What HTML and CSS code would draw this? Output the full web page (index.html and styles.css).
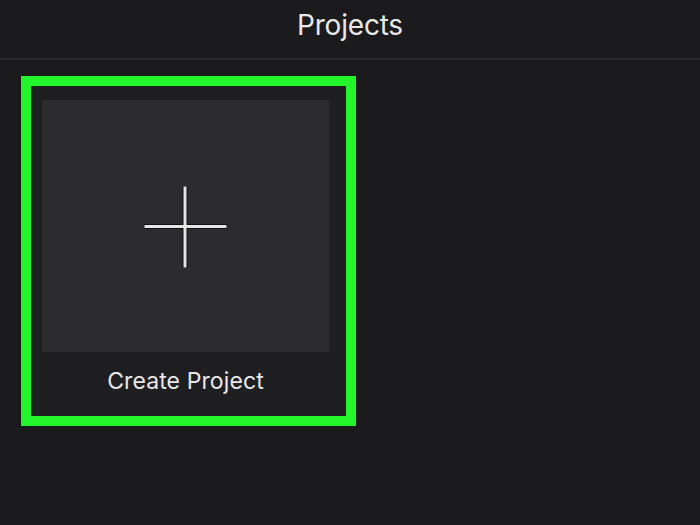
FILE: index.html
```html
<!DOCTYPE html>
<html>
<head>
    <link rel="stylesheet" href="styles.css">
</head>

<body>
    <div class="header">
        <h1 class="title">Projects</h1>
    </div>

    <div class="grid">
        <div class="project-item highlighted">
            <div class="thumb">
                <svg class="plus" viewBox="0 0 86 84" xmlns="http://www.w3.org/2000/svg">
                    <g stroke="#101012" stroke-width="5">
                        <line x1="1" y1="41.5" x2="84" y2="41.5"></line>
                        <line x1="42" y1="1" x2="42" y2="83"></line>
                    </g>
                    <g stroke="#e4e4e4" stroke-width="3">
                        <line x1="1.5" y1="41.5" x2="83.5" y2="41.5"></line>
                        <line x1="42" y1="1.5" x2="42" y2="82.5"></line>
                    </g>
                </svg>
            </div>
            <div class="label">Create Project</div>
        </div>
    </div>
</body>
</html>
```

FILE: styles.css
```css
:root {
    --background: #1b1b1d;
    --card-bg: #1f1f21;
    --thumb-bg: #2c2c2e;
    --divider: #2a2a2c;
    --text-primary: #e8e8e8;
    --highlight: #22f52a;
}

body {
    margin: 0;
    width: 700px;
    height: 525px;
    overflow: hidden;
    font-family: 'Inter', 'Roboto', sans-serif;
    background-color: var(--background);
    color: var(--text-primary);
}

.header {
    height: 58px;
    border-bottom: 2px solid var(--divider);
    display: flex;
    align-items: center;
    justify-content: center;
}

.title {
    margin: 0;
    font-size: 28px;
    font-weight: 400;
    letter-spacing: -0.2px;
    padding-bottom: 8px;
}

.grid {
    display: flex;
    padding: 16px 21px;
}

.project-item {
    width: 287px;
    height: 316px;
    padding: 14px 17px 0 11px;
    background: var(--card-bg);
}

/* green selection frame */
.project-item.highlighted {
    border: 10px solid var(--highlight);
}

.project-item .thumb {
    width: 287px;
    height: 252px;
    background: var(--thumb-bg);
    display: flex;
    align-items: center;
    justify-content: center;
}

.plus {
    width: 86px;
    height: 84px;
    margin-top: 1px;
}

.label {
    width: 287px;
    text-align: center;
    font-size: 23px;
    margin-top: 15px;
    letter-spacing: 0.1px;
}
```
